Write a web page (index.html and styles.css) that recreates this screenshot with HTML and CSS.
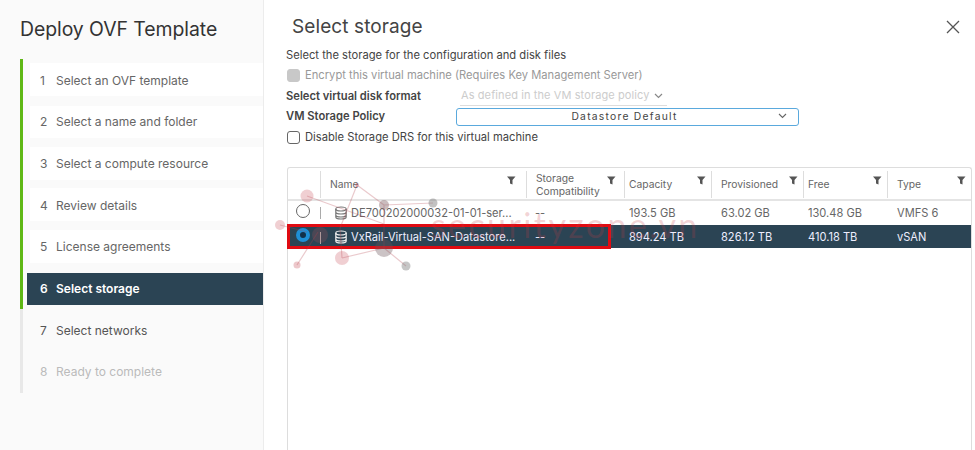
FILE: index.html
```html
<!DOCTYPE html>
<html lang="en">
<head>
<meta charset="utf-8">
<title>Deploy OVF Template</title>
<link rel="stylesheet" href="styles.css">
</head>
<body>
<div class="modal">
  <aside class="side">
    <h1 class="side-title">Deploy OVF Template</h1>
    <ol class="steps">
      <li class="step done"><span class="num">1</span>Select an OVF template</li>
      <li class="step done"><span class="num">2</span>Select a name and folder</li>
      <li class="step done"><span class="num">3</span>Select a compute resource</li>
      <li class="step done"><span class="num">4</span>Review details</li>
      <li class="step done"><span class="num">5</span>License agreements</li>
      <li class="step current"><span class="num">6</span>Select storage</li>
      <li class="step next"><span class="num">7</span>Select networks</li>
      <li class="step disabled"><span class="num">8</span>Ready to complete</li>
    </ol>
  </aside>
  <main class="content">
    <header class="head">
      <h2 class="title">Select storage</h2>
      <svg class="close" width="14" height="14" viewBox="0 0 14 14"><path d="M1 1l12 12M13 1L1 13" stroke="#555" stroke-width="1.300" fill="none"/></svg>
    </header>
    <p class="line">Select the storage for the configuration and disk files</p>
    <div class="line check-line muted"><span class="box box-off"></span>Encrypt this virtual machine (Requires Key Management Server)</div>
    <div class="line field">
      <span class="label">Select virtual disk format</span>
      <span class="fake-select">As defined in the VM storage policy
        <svg width="9" height="6" viewBox="0 0 9 6"><path d="M1 1l3.500 3.500L8 1" stroke="#888" stroke-width="1.200" fill="none"/></svg>
      </span>
    </div>
    <div class="line field">
      <span class="label">VM Storage Policy</span>
      <span class="policy"><span class="policy-text">Datastore Default</span>
        <svg class="policy-caret" width="9" height="6" viewBox="0 0 9 6"><path d="M1 1l3.500 3.500L8 1" stroke="#666" stroke-width="1.100" fill="none"/></svg>
      </span>
    </div>
    <div class="line check-line"><span class="box"></span>Disable Storage DRS for this virtual machine</div>

    <section class="grid">
      <div class="row hdr">
        <div class="cell"></div>
        <div class="cell sep"><span>Name</span><svg class="flt"><use href="#f"/></svg></div>
        <div class="cell sep two"><span>Storage<br>Compatibility</span><svg class="flt"><use href="#f"/></svg></div>
        <div class="cell sep"><span>Capacity</span><svg class="flt"><use href="#f"/></svg></div>
        <div class="cell sep"><span>Provisioned</span><svg class="flt"><use href="#f"/></svg></div>
        <div class="cell sep"><span>Free</span><svg class="flt"><use href="#f"/></svg></div>
        <div class="cell sep"><span>Type</span><svg class="flt"><use href="#f"/></svg></div>
      </div>
      <div class="row item">
        <div class="cell"><span class="radio"></span></div>
        <div class="cell bar"><svg class="db"><use href="#d"/></svg>DE700202000032-01-01-ser...</div>
        <div class="cell">--</div>
        <div class="cell">193.5 GB</div>
        <div class="cell">63.02 GB</div>
        <div class="cell">130.48 GB</div>
        <div class="cell">VMFS 6</div>
      </div>
      <div class="row item selected">
        <div class="cell"><span class="radio on"></span></div>
        <div class="cell bar"><svg class="db"><use href="#d"/></svg>VxRail-Virtual-SAN-Datastore...</div>
        <div class="cell">--</div>
        <div class="cell">894.24 TB</div>
        <div class="cell">826.12 TB</div>
        <div class="cell">410.18 TB</div>
        <div class="cell">vSAN</div>
      </div>
      <div class="red-box"></div>
    </section>
  </main>
</div>

<svg class="watermark" width="975" height="450" viewBox="0 0 975 450">
  <g stroke="#b5404a" stroke-opacity=".28" stroke-width="1.200" fill="none">
    <path d="M307 196L384 224M357 185L384 205M357 185L340 228L342 258M384 205L433 203M384 205L384 248M384 248L406 266M342 258L384 248M297 265L318 232M280 225L307 232"/>
  </g>
  <g>
    <circle cx="307" cy="196" r="6.500" fill="#c8545c" fill-opacity=".28"/>
    <circle cx="384" cy="205" r="5" fill="#8a6a6e" fill-opacity=".45"/>
    <circle cx="433" cy="203" r="4.500" fill="#777" fill-opacity=".45"/>
    <circle cx="357" cy="185" r="2" fill="#c8545c" fill-opacity=".35"/>
    <circle cx="280" cy="225" r="5" fill="#c8545c" fill-opacity=".28"/>
    <circle cx="342" cy="258" r="7" fill="#c8545c" fill-opacity=".28"/>
    <circle cx="384" cy="248" r="9" fill="#6a5458" fill-opacity=".35"/>
    <circle cx="406" cy="266" r="4.500" fill="#777" fill-opacity=".42"/>
    <circle cx="297" cy="265" r="3.500" fill="#c8545c" fill-opacity=".32"/>
    <circle cx="320" cy="235" r="8" fill="#c8545c" fill-opacity=".2"/>
  </g>
  <text class="wm-text" x="431" y="238">securityzone.vn</text>
</svg>

<svg class="defs" width="0" height="0">
  <symbol id="f" viewBox="0 0 9 9"><path d="M0 .5h8.500L5.500 4v4.500l-2.500-1V4z" fill="#555"/></symbol>
  <symbol id="d" viewBox="0 0 14 14"><g fill="none" stroke="currentColor" stroke-width="1.200"><ellipse cx="7" cy="3" rx="5.200" ry="2"/><path d="M1.800 3v8c0 1.100 2.300 2 5.200 2s5.200-.9 5.200-2V3M1.800 6c0 1.100 2.300 2 5.200 2s5.200-.9 5.200-2M1.800 9c0 1.100 2.300 2 5.200 2s5.200-.9 5.200-2"/></g></symbol>
</svg>
</body>
</html>
```
FILE: styles.css
```css
* { box-sizing: border-box; }
html, body { margin: 0; padding: 0; height: 100%; overflow: hidden; background: #fff; }
body { font-family: "Inter", "Open Sans", sans-serif; color: #555; }
.modal { display: flex; width: 975px; height: 450px; }

.side { width: 264px; flex: none; background: #fafafa; border-right: 1px solid #ececec; padding: 17px 0 0 20px; }
.side-title { margin: 0; font-size: 19.400px; line-height: 24px; font-weight: 400; color: #333; letter-spacing: -.05px; }
.steps { list-style: none; margin: 18.400px 0 0; padding: 0; width: 243px; }
.step { display: flex; align-items: center; height: 41.650px; padding: 0 0 0 7px; border-left: 3px solid #5eb715; position: relative; font-size: 12px; color: #666; background: linear-gradient(#fafafa 0 4.500px, #fff 4.500px 37px, #fafafa 37px) 7px 0 / 100% 100% no-repeat; }
.step .num { width: 26px; padding-left: 10px; flex: none; }
.step.current { background: linear-gradient(#fafafa 0 4.500px, #2b4454 4.500px 36.500px, #fafafa 36.500px) 4px 0 / 100% 100% no-repeat; color: #fff; font-weight: 600; }
.step.next { border-left-color: #e8e8e8; background: none; color: #555; }
.step.disabled { border-left-color: #e8e8e8; background: none; color: #bbb; }

.content { flex: 1; min-width: 0; padding: 0 3px 0 22px; display: flex; flex-direction: column; }
.head { display: flex; justify-content: space-between; align-items: center; height: 47px; padding: 9px 12px 0 6px; }
.title { margin: 0; font-size: 19px; line-height: 24px; font-weight: 400; color: #444; letter-spacing: .1px; }
.line { margin: 0; font-size: 11.200px; line-height: 20.500px; color: #444; height: 20.500px; white-space: nowrap; }
.check-line { display: flex; align-items: center; gap: 5px; }
.muted { color: #999; }
.box { width: 13px; height: 13px; border: 1px solid #666; border-radius: 3px; background: #fff; flex: none; }
.box-off { background: #c8c8c8; border-color: #c8c8c8; }
.check-line .box { margin-left: 1px; }
.field { display: flex; align-items: center; }
.label { width: 170px; font-weight: 600; color: #444; flex: none; font-size: 11.200px; }
.fake-select { margin-left: 4px; width: 207px; height: 20px; line-height: 19px; border-bottom: 1px solid #ddd; color: #ccc; letter-spacing: .1px; padding-left: 1px; white-space: nowrap; display: flex; align-items: center; justify-content: space-between; padding-right: 4px; font-size: 11px; }
.policy { display: flex; align-items: center; justify-content: center; position: relative; width: 343px; height: 18px; border: 1.500px solid #5aa9dd; border-radius: 3px; font-size: 10.300px; letter-spacing: 1.250px; color: #444; padding-right: 6px; }
.policy-caret { position: absolute; right: 11px; top: 4px; }

.grid { position: relative; margin: 20px 0 0 1px; width: 685px; height: 300px; border: 1.500px solid #ddd; border-bottom: 0; border-radius: 3px 3px 0 0; font-size: 11.100px; }
.row { display: grid; grid-template-columns: 32px 206px 98px 87px 92px 84px 84px; }
.hdr { height: 33px; border-bottom: 2px solid #e4e4e4; font-size: 10.300px; color: #666; line-height: 13px; }
.hdr .cell { display: flex; align-items: center; justify-content: space-between; position: relative; height: 27px; margin-top: 3px; padding: 0 5px 0 9px; }
.hdr .sep { border-left: 1px solid #ddd; padding-left: 9px; }
.hdr .cell:nth-child(4), .hdr .cell:nth-child(6) { padding-left: 4px; }
.flt { width: 9px; height: 9px; flex: none; align-self: flex-start; margin-top: 5px; }
.hdr .cell:nth-child(2) .flt { margin-right: 5px; }
.hdr .cell:nth-child(3) .flt { margin-right: 3px; }
.item { height: 24px; align-items: center; color: #666; }
.item .cell { white-space: nowrap; padding-left: 9px; line-height: 24px; }
.item .cell:nth-child(4), .item .cell:nth-child(6) { padding-left: 5px; }
.item .cell:nth-child(5), .item .cell:nth-child(7) { padding-left: 10px; }
.item .bar { display: flex; align-items: center; position: relative; padding-left: 14px; gap: 3px; }
.item .bar::before { content: ""; position: absolute; left: 0; top: 6px; height: 12px; border-left: 1px solid #aaa; }
.db { width: 14px; height: 14px; color: #777; flex: none; }
.selected { height: 23px; background: #2b4454; color: #eef; }
.selected .cell { line-height: 22px; }
.selected .db { color: #eee; }
.radio { display: block; width: 14px; height: 14px; margin: -4px 0 0 -1px; border: 1.300px solid #666; border-radius: 50%; background: #fff; }
.radio.on { border: 4px solid #1e8fd6; background: #12304a; }
.red-box { position: absolute; left: -1px; top: 56px; width: 324px; height: 25px; border: 3px solid #e00b12; }

.watermark { position: absolute; left: 0; top: 0; pointer-events: none; }
.wm-text { font-family: "Lato", sans-serif; font-size: 34px; letter-spacing: 2.400px; fill: #c83c46; fill-opacity: .22; }
.defs { position: absolute; }
```
